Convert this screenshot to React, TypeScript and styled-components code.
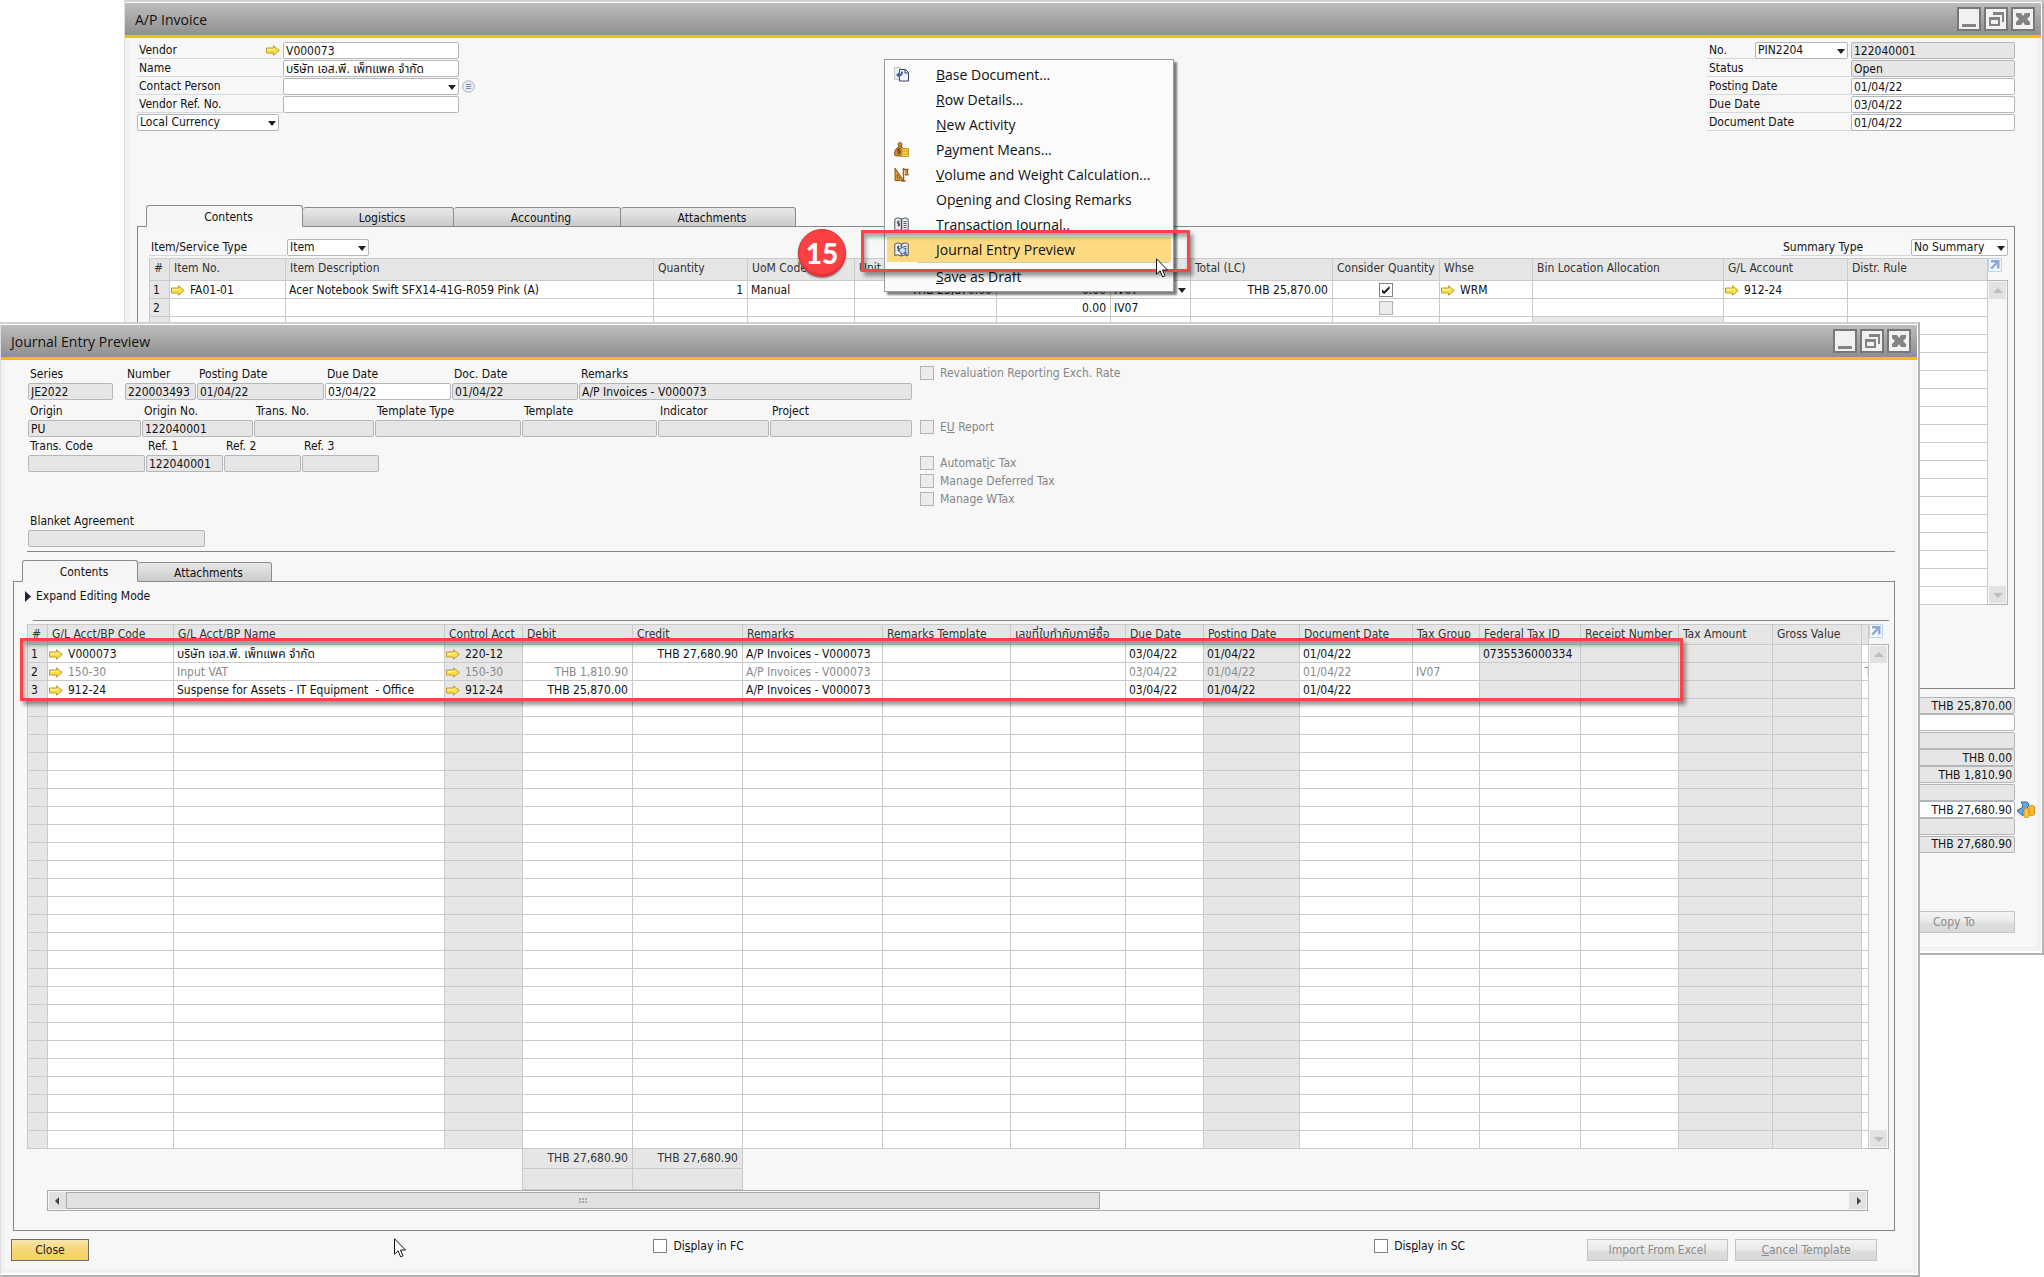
import React, { useId } from 'react';
import styled, { createGlobalStyle, css } from 'styled-components';

const ui = '"DejaVu Sans Condensed", "DejaVu Sans", "Noto Sans Thai", "Noto Sans", sans-serif';
const title = '"Open Sans", "Noto Sans", sans-serif';

const GlobalStyle = createGlobalStyle`
  *, *::before, *::after { box-sizing: border-box; }
  body { margin: 0; background: #fff; overflow: hidden; }
  body, button, input, select, table { font-family: ${ui}; font-size: 12px; line-height: 17px; color: #111; }
`;

/* ---------- desktop and windows ---------- */

const Desktop = styled.main`
  position: relative;
  display: grid;
  align-items: start;
  min-height: 100vh;
`;

const Frame = styled.section<{ $front?: boolean }>`
  isolation: isolate;
  grid-area: 1 / 1;
  min-width: 0;
  margin: ${p => (p.$front ? '322px 124px 0 0' : '0 0 0 124px')};
  padding: 1px 1px 2px 0;
  background: #fff;
  border: solid #b2b2b2;
  border-width: 2px 2px 2px 1px;
  border-top-color: #d0d0d0;
  border-left-color: #dedede;
`;

const TitleBar = styled.header`
  display: flex;
  align-items: center;
  gap: 3px;
  height: 35px;
  padding: 0 6px 0 10px;
  background: linear-gradient(#bdbdbd, #8f8f8f);
  border-bottom: 3px solid #fdb913;
`;

const Title = styled.h1`
  flex: 1;
  margin: 0;
  padding-top: 2px;
  font: 400 14px/20px ${title};
`;

const CaptionButton = styled.button`
  display: grid;
  place-items: center;
  width: 24px;
  height: 24px;
  padding: 0;
  background: #f1f1f1;
  border: 2px solid #777;
`;

const Body = styled.div`
  background: #f7f7f7;
  border: solid #f1f1f1;
  border-width: 0 4px 4px;
`;

const captions = [
  { name: 'Minimize', d: 'M3 15h14v3H3z' },
  { name: 'Restore', d: 'M7 3h11v10h-2V6H7zM3 8h11v9H3zM5 11v4h7v-4z' },
  { name: 'Close', d: 'M3 4h5l2 3 2-3h5v3l-3 3 3 3v3h-5l-2-3-2 3H3v-3l3-3-3-3z' },
];

function AppWindow({ name, front, children }: { name: string; front?: boolean; children: React.ReactNode }) {
  return (
    <Frame $front={front} aria-label={name}>
      <TitleBar>
        <Title>{name}</Title>
        {captions.map(c => (
          <CaptionButton key={c.name} type="button" aria-label={c.name}>
            <svg width="20" height="20" viewBox="0 0 20 20"><path d={c.d} fill="#838383" fillRule="evenodd" /></svg>
          </CaptionButton>
        ))}
      </TitleBar>
      <Body>{children}</Body>
    </Frame>
  );
}

/* ---------- form parts ---------- */

const fieldLook = css`
  display: block;
  width: 100%;
  min-width: 0;
  height: 17px;
  padding: 0 2px;
  line-height: 15px;
  border: 1px solid #b4b7b9;
  border-radius: 2px;
  background: #fff;
`;

const TextBox = styled.input<{ $right?: boolean }>`
  ${fieldLook}
  text-align: ${p => (p.$right ? 'right' : 'left')};
  &:read-only { background: #e6e6e6; }
`;

const SelectBox = styled.select`
  ${fieldLook}
  appearance: none;
`;

const SelectWrap = styled.span<{ $width?: number }>`
  position: relative;
  display: block;
  flex: none;
  width: ${p => (p.$width ? `${p.$width}px` : '100%')};
  &::after {
    content: '';
    position: absolute;
    right: 3px;
    top: 7px;
    border: 4px solid transparent;
    border-top: 5px solid #222;
    border-bottom: 0;
    pointer-events: none;
  }
`;

function Select({ id, value, label, width }: { id?: string; value: string; label?: string; width?: number }) {
  return (
    <SelectWrap $width={width}>
      <SelectBox id={id} aria-label={label} defaultValue={value}>
        <option>{value}</option>
      </SelectBox>
    </SelectWrap>
  );
}

const LineLabel = styled.label`
  display: flex;
  align-items: center;
  justify-content: space-between;
  height: 17px;
  padding: 0 3px 0 2px;
  border-bottom: 1px solid #d3d8dc;
  white-space: nowrap;
`;

const LinkIcon = () => (
  <svg width="14" height="11" viewBox="0 0 14 11" aria-hidden="true">
    <path d="M.5 3h7V.8L13.3 5.5 7.500 10.200V8H.5z" fill="#fbe04a" stroke="#c09a32" />
    <path d="M1.500 4.500h7" stroke="#fff6b5" />
  </svg>
);

const ListIcon = () => (
  <svg width="13" height="13" viewBox="0 0 13 13" aria-hidden="true">
    <circle cx="6.500" cy="6.500" r="5.800" fill="#e6ebf5" stroke="#a6b1c8" />
    <path d="M4 4.500h5M4 6.500h5M4 8.500h5" stroke="#7e8aa6" />
  </svg>
);

const HeadFields = styled.div`
  display: flex;
  justify-content: space-between;
  align-items: flex-start;
  padding: 4px 22px 74px 8px;
`;

const FieldGrid = styled.div<{ $cols: string }>`
  display: grid;
  grid-template-columns: ${p => p.$cols};
  gap: 1px 0;
  align-items: center;
`;

const Spot = styled.span`
  padding-left: 3px;
  line-height: 0;
`;

const WideLabel = styled(LineLabel)`
  grid-column: span 2;
`;

/* ---------- tabs ---------- */

const TabStrip = styled.div`
  display: flex;
  align-items: flex-end;
  height: 22px;
  margin-bottom: -1px;
  padding-left: 17px;
`;

const Tab = styled.button<{ $width: number; $active?: boolean }>`
  position: relative;
  width: ${p => p.$width}px;
  height: ${p => (p.$active ? 22 : 20)}px;
  padding: 2px 0 0 8px;
  border: 1px solid #8b8b8b;
  border-radius: 3px 3px 0 0;
  ${p =>
    p.$active
      ? css`background: #f6f6f6; border-bottom-color: #f7f7f7;`
      : css`background: linear-gradient(#e9e9e9, #cbcbcb); border-left-width: 0;`}
`;

const Panel = styled.div<{ $pad: string; $margin: string }>`
  margin: ${p => p.$margin};
  padding: ${p => p.$pad};
  border: 1px solid #868686;
`;

/* ---------- grids ---------- */

const GridRow = styled.div`
  display: flex;
  position: relative;
`;

const Table = styled.table`
  flex: 1;
  width: 0;
  min-width: 0;
  table-layout: fixed;
  border-collapse: separate;
  border-spacing: 0;
  border: solid #cacaca;
  border-width: 1px 0 0 1px;
`;

const Th = styled.th<{ $tall?: boolean }>`
  height: ${p => (p.$tall ? 22 : 20)}px;
  padding: ${p => (p.$tall ? '0 0 3px 4px' : '0 0 0 4px')};
  overflow: hidden;
  background: #e5e5e5;
  border: solid #cacaca;
  border-width: 0 1px 1px 0;
  color: #333;
  font-weight: 400;
  text-align: left;
  white-space: nowrap;
`;

const Td = styled.td<{ $shade?: boolean; $dim?: boolean; $align?: string }>`
  height: 18px;
  padding: 2px 4px 0 3px;
  overflow: hidden;
  background: ${p => (p.$shade ? '#e6e6e6' : '#fff')};
  border: solid #cacaca;
  border-width: 0 1px 1px 0;
  color: ${p => (p.$dim ? '#8a8a8a' : '#111')};
  line-height: 15px;
  text-align: ${p => p.$align || 'left'};
  white-space: pre;
`;

const Linked = styled.span`
  display: flex;
  align-items: center;
  gap: 5px;
  margin-left: -2px;
`;

const CellDrop = styled.span`
  display: flex;
  align-items: center;
  justify-content: space-between;
  &::after {
    content: '';
    border: 4px solid transparent;
    border-top: 5px solid #222;
    border-bottom: 0;
  }
`;

const Side = styled.div<{ $head: number }>`
  display: flex;
  flex-direction: column;
  width: 20px;
  & > :first-child { height: ${p => p.$head}px; }
`;

const ExpandButton = styled.button`
  display: flex;
  align-items: flex-start;
  flex: none;
  padding: 0;
  border: 0;
  background: none;
  line-height: 0;
`;

const VScroll = styled.div`
  flex: 1;
  display: flex;
  flex-direction: column;
  justify-content: space-between;
  padding: 1px;
  border: 1px solid #b3b3b3;
  border-left-width: 0;
`;

const ScrollButton = styled.button`
  display: grid;
  place-items: center;
  width: 17px;
  height: 17px;
  padding: 0;
  border: 0;
  background: #e2e2e2;
`;

const Triangle = ({ dir, color }: { dir: 'up' | 'down' | 'left' | 'right'; color: string }) => {
  const d = { up: 'M0 7l5-5 5 5z', down: 'M0 3l5 5 5-5z', left: 'M6 1L2 5l4 4z', right: 'M4 1l4 4-4 4z' }[dir];
  return <svg width="10" height="10" viewBox="0 0 10 10" aria-hidden="true"><path d={d} fill={color} /></svg>;
};

function GridSide({ head }: { head: number }) {
  return (
    <Side $head={head}>
      <ExpandButton type="button" aria-label="Expand grid">
        <svg width="14" height="14" viewBox="0 0 14 14">
          <path d="M.5.5h13v13H.5z" fill="#f2f7fc" stroke="#b9d3ea" />
          <path d="M3 2h8.500v8.500h-2.500V6.300L4 11.500 2.300 9.800 7.500 4.500H3z" fill="#8fa9cf" />
        </svg>
      </ExpandButton>
      <VScroll>
        <ScrollButton type="button" aria-label="Scroll up"><Triangle dir="up" color="#bdbdbd" /></ScrollButton>
        <ScrollButton type="button" aria-label="Scroll down"><Triangle dir="down" color="#bdbdbd" /></ScrollButton>
      </VScroll>
    </Side>
  );
}

const Check = styled.input`
  appearance: none;
  flex: none;
  display: grid;
  place-items: center;
  width: 14px;
  height: 14px;
  margin: 0;
  background: #fff;
  border: 1px solid #808080;
  &:disabled { background: #ececec; border-color: #b3b3b3; }
  &:checked::after {
    content: '';
    width: 8px;
    height: 8px;
    background: #111;
    clip-path: polygon(0 40%, 35% 65%, 100% 0, 100% 35%, 35% 100%, 0 75%);
  }
`;

const CellCheck = styled(Check)`
  margin: 0 auto 1px;
`;

type Col = { name: string; width: number; shade?: boolean; align?: string; untitled?: boolean };
type Cell = { text?: string; link?: boolean; drop?: boolean; check?: 'on' | 'off'; shade?: boolean };
type Row = { dim?: boolean; cells: Record<string, Cell | string> };

function DataGrid({ cols, rows, count, numbered, tall, label }: {
  cols: Col[]; rows: Row[]; count: number; numbered: number; tall?: boolean; label: string;
}) {
  return (
    <Table aria-label={label}>
      <colgroup>{cols.map(c => <col key={c.name} width={c.width} />)}</colgroup>
      <thead>
        <tr>{cols.map(c => <Th key={c.name} $tall={tall} scope="col">{c.untitled ? '' : c.name}</Th>)}</tr>
      </thead>
      <tbody>
        {Array.from({ length: count }, (_, r) => {
          const row = rows[r];
          return (
            <tr key={r}>
              {cols.map((c, i) => {
                const raw = row?.cells[c.name];
                const cell: Cell = i === 0 ? { text: r < numbered ? String(r + 1) : '' } : typeof raw === 'string' ? { text: raw } : raw || {};
                return (
                  <Td key={c.name} $shade={c.shade || cell.shade} $dim={i > 0 && row?.dim} $align={c.align}>
                    {cell.link ? <Linked><LinkIcon />{cell.text}</Linked>
                      : cell.drop ? <CellDrop>{cell.text}</CellDrop>
                      : cell.check ? <CellCheck type="checkbox" aria-label="Consider Quantity" defaultChecked={cell.check === 'on'} disabled={cell.check === 'off'} />
                      : cell.text}
                  </Td>
                );
              })}
            </tr>
          );
        })}
      </tbody>
    </Table>
  );
}

/* ---------- A/P invoice ---------- */

const invoiceCols: Col[] = [
  { name: '#', width: 20, shade: true },
  { name: 'Item No.', width: 116 },
  { name: 'Item Description', width: 368 },
  { name: 'Quantity', width: 94, align: 'right' },
  { name: 'UoM Code', width: 107 },
  { name: 'Unit Price', width: 142, align: 'right' },
  { name: 'discount', width: 114, align: 'right', untitled: true },
  { name: 'taxCode', width: 80, untitled: true },
  { name: 'Total (LC)', width: 142, align: 'right' },
  { name: 'Consider Quantity', width: 107 },
  { name: 'Whse', width: 93 },
  { name: 'Bin Location Allocation', width: 191 },
  { name: 'G/L Account', width: 124 },
  { name: 'Distr. Rule', width: 140 },
];

const invoiceRows: Row[] = [
  {
    cells: {
      'Item No.': { text: 'FA01-01', link: true },
      'Item Description': 'Acer Notebook Swift SFX14-41G-R059 Pink (A)',
      Quantity: '1',
      'UoM Code': 'Manual',
      'Unit Price': 'THB 25,870.00',
      discount: '0.00',
      taxCode: { text: 'IV07', drop: true },
      'Total (LC)': 'THB 25,870.00',
      'Consider Quantity': { check: 'on' },
      Whse: { text: 'WRM', link: true },
      'G/L Account': { text: '912-24', link: true },
    },
  },
  { cells: { discount: '0.00', taxCode: 'IV07', 'Consider Quantity': { check: 'off' } } },
  { cells: { 'Bin Location Allocation': { shade: true } } },
];

const Toolbar = styled.div`
  display: flex;
  padding-bottom: 2px;
`;

const ToolLabel = styled(LineLabel)<{ $width: number }>`
  width: ${p => p.$width}px;
`;

const Spacer = styled.div`
  flex: 1;
`;

const Totals = styled.div`
  display: grid;
  grid-template-columns: 180px 18px;
  grid-auto-rows: 1fr;
  justify-content: end;
  align-items: center;
  gap: 0 2px;
  height: 156px;
  padding-right: 2px;
`;

const totals: [string, string, boolean?][] = [
  ['Total Before Discount', 'THB 25,870.00'],
  ['Discount', '', true],
  ['Total Down Payment', ''],
  ['Rounding', 'THB 0.00'],
  ['Tax', 'THB 1,810.90'],
  ['WTax Amount', ''],
  ['Total Payment Due', 'THB 27,680.90', true],
  ['Applied Amount', ''],
  ['Balance Due', 'THB 27,680.90'],
];

const CoinsIcon = () => (
  <svg width="18" height="17" viewBox="0 0 18 17" aria-hidden="true">
    <path d="M4 1h6l2 2-1 3-5 4v5L.5 10.500V9L5 7l1-3z" fill="#6aa7d8" stroke="#2c6ea5" />
    <path d="M7 9c0-2 5-2 5 0v6c0 2-5 2-5 0z" fill="#fbc63c" stroke="#d98a14" />
    <path d="M12 6c0-2 5.500-2 5.500 0v7c0 2-5.500 2-5.500 0z" fill="#fdb92c" stroke="#d98a14" />
  </svg>
);

const PushButton = styled.button<{ $width: number }>`
  width: ${p => p.$width}px;
  height: 22px;
  padding: 0;
  border: 1px solid #6b6b6b;
  background: linear-gradient(#f9e6b0, #f6d878 45%, #f5d066);
  color: #222;
  &:disabled {
    border-color: #c4c4c4;
    background: linear-gradient(#f4f4f4, #e9e9e9 50%, #dedede 55%, #d9d9d9);
    color: #8b8b8b;
  }
`;

const InvoiceFoot = styled.div`
  display: flex;
  justify-content: flex-end;
  padding: 58px 22px 14px;
`;

function Invoice() {
  const id = useId();
  const right: [string, string, boolean][] = [
    ['Status', 'Open', true],
    ['Posting Date', '01/04/22', false],
    ['Due Date', '03/04/22', false],
    ['Document Date', '01/04/22', false],
  ];
  return (
    <AppWindow name="A/P Invoice">
      <HeadFields>
        <FieldGrid $cols="146px 176px 20px">
          <LineLabel htmlFor={id + 'v'}>Vendor<LinkIcon /></LineLabel>
          <TextBox id={id + 'v'} defaultValue="V000073" /><i />
          <LineLabel htmlFor={id + 'n'}>Name</LineLabel>
          <TextBox id={id + 'n'} defaultValue="บริษัท เอส.พี. เพ็ทแพค จำกัด" /><i />
          <LineLabel htmlFor={id + 'c'}>Contact Person</LineLabel>
          <Select id={id + 'c'} value="" />
          <Spot><ListIcon /></Spot>
          <LineLabel htmlFor={id + 'r'}>Vendor Ref. No.</LineLabel>
          <TextBox id={id + 'r'} defaultValue="" /><i />
          <Select label="Currency" value="Local Currency" width={142} />
        </FieldGrid>
        <FieldGrid $cols="48px 96px 164px">
          <LineLabel htmlFor={id + 's'}>No.</LineLabel>
          <Select id={id + 's'} value="PIN2204" width={93} />
          <TextBox aria-label="Document number" readOnly value="122040001" />
          {right.map(([name, value, locked]) => (
            <React.Fragment key={name}>
              <WideLabel htmlFor={id + name}>{name}</WideLabel>
              <TextBox id={id + name} readOnly={locked} defaultValue={value} />
            </React.Fragment>
          ))}
        </FieldGrid>
      </HeadFields>

      <TabStrip role="tablist">
        <Tab role="tab" type="button" $width={157} $active>Contents</Tab>
        <Tab role="tab" type="button" $width={151}>Logistics</Tab>
        <Tab role="tab" type="button" $width={167}>Accounting</Tab>
        <Tab role="tab" type="button" $width={175}>Attachments</Tab>
      </TabStrip>
      <Panel $margin="0 22px 8px 8px" $pad="12px 6px 83px 11px">
        <Toolbar>
          <ToolLabel $width={138} htmlFor={id + 't'}>Item/Service Type</ToolLabel>
          <Select id={id + 't'} value="Item" width={82} />
          <Spacer />
          <ToolLabel $width={130} htmlFor={id + 'y'}>Summary Type</ToolLabel>
          <Select id={id + 'y'} value="No Summary" width={97} />
        </Toolbar>
        <GridRow>
          <DataGrid label="Invoice items" cols={invoiceCols} rows={invoiceRows} count={18} numbered={2} tall />
          <GridSide head={22} />
        </GridRow>
      </Panel>
      <Totals>
        {totals.map(([name, value, open]) => (
          <React.Fragment key={name}>
            <TextBox aria-label={name} $right readOnly={!open} defaultValue={value} />
            {name === 'Total Payment Due' ? <CoinsIcon /> : <i />}
          </React.Fragment>
        ))}
      </Totals>
      <InvoiceFoot>
        <PushButton $width={122} type="button" disabled>Copy To</PushButton>
      </InvoiceFoot>
    </AppWindow>
  );
}

/* ---------- journal entry preview ---------- */

const entryCols: Col[] = [
  { name: '#', width: 20, shade: true },
  { name: 'G/L Acct/BP Code', width: 126 },
  { name: 'G/L Acct/BP Name', width: 271 },
  { name: 'Control Acct', width: 78, shade: true },
  { name: 'Debit', width: 110, align: 'right' },
  { name: 'Credit', width: 110, align: 'right' },
  { name: 'Remarks', width: 140 },
  { name: 'Remarks Template', width: 128 },
  { name: 'เลขที่ใบกำกับภาษีซื้อ', width: 115 },
  { name: 'Due Date', width: 78 },
  { name: 'Posting Date', width: 96, shade: true },
  { name: 'Document Date', width: 113 },
  { name: 'Tax Group', width: 67 },
  { name: 'Federal Tax ID', width: 101 },
  { name: 'Receipt Number', width: 98 },
  { name: 'Tax Amount', width: 94, shade: true },
  { name: 'Gross Value', width: 89, shade: true },
  { name: 'base', width: 7, untitled: true },
];

const shared = {
  Remarks: 'A/P Invoices - V000073',
  'Due Date': '03/04/22',
  'Posting Date': '01/04/22',
  'Document Date': '01/04/22',
  'Federal Tax ID': { shade: true },
  'Receipt Number': { shade: true },
};

const entryRows: Row[] = [
  {
    cells: {
      ...shared,
      'G/L Acct/BP Code': { text: 'V000073', link: true },
      'G/L Acct/BP Name': 'บริษัท เอส.พี. เพ็ทแพค จำกัด',
      'Control Acct': { text: '220-12', link: true },
      Credit: 'THB 27,680.90',
      'Federal Tax ID': { text: '0735536000334', shade: true },
    },
  },
  {
    dim: true,
    cells: {
      ...shared,
      'G/L Acct/BP Code': { text: '150-30', link: true },
      'G/L Acct/BP Name': 'Input VAT',
      'Control Acct': { text: '150-30', link: true },
      Debit: 'THB 1,810.90',
      'Tax Group': 'IV07',
      base: 'T',
    },
  },
  {
    cells: {
      ...shared,
      'G/L Acct/BP Code': { text: '912-24', link: true },
      'G/L Acct/BP Name': 'Suspense for Assets - IT Equipment  - Office',
      'Control Acct': { text: '912-24', link: true },
      Debit: 'THB 25,870.00',
    },
  },
];

const EntryHead = styled.div`
  display: flex;
  align-items: flex-start;
  gap: 7px;
  margin: 0 18px 8px 22px;
  padding: 5px 0 4px 1px;
  border-bottom: 1px solid #868686;
`;

const EntryForm = styled.div`
  width: 885px;
`;

const FormLine = styled.div<{ $cols: string; $gap?: number }>`
  display: grid;
  grid-template-columns: ${p => p.$cols};
  margin-top: ${p => p.$gap || 0}px;
`;

const Stack = styled.label<{ $inset?: number }>`
  display: block;
  min-width: 0;
  padding-right: ${p => p.$inset || 1}px;
  white-space: nowrap;
`;

const Caption = styled.span`
  display: block;
  height: 18px;
  padding: 1px 0 0 2px;
`;

type F = [string, string?, number?];
function Fields({ cols, gap, items }: { cols: string; gap?: number; items: F[] }) {
  return (
    <FormLine $cols={cols} $gap={gap}>
      {items.map(([name, value, inset]) => (
        <Stack key={name} $inset={inset}>
          <Caption>{name}</Caption>
          <TextBox readOnly={name !== 'Due Date'} defaultValue={value || ''} />
        </Stack>
      ))}
    </FormLine>
  );
}

const Flags = styled.div`
  display: grid;
  grid-auto-rows: 18px;
  padding-top: 1px;
`;

const Flag = styled.label<{ $row?: number; $dim?: boolean }>`
  grid-row: ${p => p.$row || 'auto'};
  display: flex;
  align-items: flex-start;
  gap: 6px;
  line-height: 15px;
  white-space: pre;
  color: ${p => (p.$dim ? '#858585' : '#111')};
`;

const ExpandToggle = styled.button`
  display: flex;
  align-items: center;
  gap: 5px;
  height: 18px;
  margin: 5px 0 15px 11px;
  padding: 0;
  border: 0;
  background: none;
`;

const Rule = styled.hr`
  height: 1px;
  margin: 0 5px 3px 19px;
  border: 0;
  background: #868686;
`;

const TableArea = styled.div`
  padding: 0 5px 0 13px;
`;

const Sums = styled.div`
  display: grid;
  grid-template-columns: 110px 110px;
  grid-auto-rows: 20px 21px;
  width: 221px;
  margin-left: 495px;
  border-left: 1px solid #cacaca;
`;

const Sum = styled.output`
  padding: 1px 4px 0;
  background: #e6e6e6;
  border: solid #cacaca;
  border-width: 0 1px 1px 0;
  text-align: right;
  color: #333;
`;

const HScroll = styled.div`
  display: flex;
  align-items: center;
  height: 21px;
  margin: 0 21px 0 20px;
  padding: 1px;
  border: 1px solid #a9a9a9;
`;

const Track = styled.div`
  flex: 1;
  height: 17px;
`;

const Thumb = styled.div`
  display: flex;
  align-items: center;
  justify-content: center;
  width: 58%;
  height: 17px;
  background: #e1e1e1;
  border: 1px solid #a9a9a9;
`;

const Grip = styled.i`
  width: 9px;
  height: 6px;
  background: radial-gradient(circle at 1px 1px, #aaa 1px, transparent 1px) 0 0 / 3px 3px;
`;

const EntryFoot = styled.footer`
  display: flex;
  padding: 0 36px 8px 6px;
`;

const FootGap = styled.div<{ $grow: number }>`
  flex: ${p => p.$grow} 0 0;
`;

const ButtonPair = styled.div`
  display: flex;
  gap: 7px;
`;

const callout = css`
  border: 3px solid #fd4444;
  box-shadow: 3px 4px 4px rgba(0, 0, 0, 0.4), inset 2px 4px 4px rgba(0, 0, 0, 0.35);
  pointer-events: none;
`;

const RowMark = styled.div`
  position: absolute;
  left: -7px;
  top: 14px;
  width: 1663px;
  height: 63px;
  ${callout}
`;

function JournalEntry() {
  return (
    <AppWindow name="Journal Entry Preview" front>
      <EntryHead>
        <EntryForm>
          <Fields cols="97px 72px 128px 127px 127px 334px" items={[
            ['Series', 'JE2022', 12], ['Number', '220003493'], ['Posting Date', '01/04/22'],
            ['Due Date', '03/04/22'], ['Doc. Date', '01/04/22'], ['Remarks', 'A/P Invoices - V000073'],
          ]} />
          <Fields gap={2} cols="114px 112px 121px 147px 136px 112px 143px" items={[
            ['Origin', 'PU'], ['Origin No.', '122040001'], ['Trans. No.'], ['Template Type'], ['Template'], ['Indicator'], ['Project'],
          ]} />
          <Fields cols="118px 78px 78px 78px" items={[['Trans. Code'], ['Ref. 1', '122040001'], ['Ref. 2'], ['Ref. 3']]} />
          <Fields gap={40} cols="178px" items={[['Blanket Agreement']]} />
        </EntryForm>
        <Flags>
          <Flag $row={1} $dim><Check type="checkbox" disabled /><span>Revaluation Reporting Exch. Rate</span></Flag>
          <Flag $row={4} $dim><Check type="checkbox" disabled /><span>E<u>U</u> Report</span></Flag>
          <Flag $row={6} $dim><Check type="checkbox" disabled /><span>Automat<u>i</u>c Tax</span></Flag>
          <Flag $row={7} $dim><Check type="checkbox" disabled /><span>Manage Deferred Tax</span></Flag>
          <Flag $row={8} $dim><Check type="checkbox" disabled /><span>Manage WTax</span></Flag>
        </Flags>
      </EntryHead>

      <TabStrip role="tablist">
        <Tab role="tab" type="button" $width={116} $active>Contents</Tab>
        <Tab role="tab" type="button" $width={134}>Attachments</Tab>
      </TabStrip>
      <Panel $margin="0 18px 8px 8px" $pad="0 0 19px">
        <ExpandToggle type="button">
          <svg width="6" height="11" viewBox="0 0 6 11" aria-hidden="true"><path d="M0 0l6 5.500L0 11z" fill="#222236" /></svg>
          Expand Editing Mode
        </ExpandToggle>
        <Rule />
        <TableArea>
          <GridRow>
            <DataGrid label="Journal entry rows" cols={entryCols} rows={entryRows} count={28} numbered={3} />
            <GridSide head={20} />
            <RowMark />
          </GridRow>
          <Sums>
            <Sum>THB 27,680.90</Sum>
            <Sum>THB 27,680.90</Sum>
            <Sum />
            <Sum />
          </Sums>
          <HScroll>
            <ScrollButton type="button" aria-label="Scroll left"><Triangle dir="left" color="#444" /></ScrollButton>
            <Track><Thumb><Grip /></Thumb></Track>
            <ScrollButton type="button" aria-label="Scroll right"><Triangle dir="right" color="#444" /></ScrollButton>
          </HScroll>
        </TableArea>
      </Panel>
      <EntryFoot>
        <PushButton $width={78} type="button">Close</PushButton>
        <FootGap $grow={565} />
        <Flag><Check type="checkbox" /><span>Di<u>s</u>play in FC</span></Flag>
        <FootGap $grow={631} />
        <Flag><Check type="checkbox" /><span>Dis<u>p</u>lay in SC</span></Flag>
        <FootGap $grow={122} />
        <ButtonPair>
          <PushButton $width={141} type="button" disabled>Import From Excel</PushButton>
          <PushButton $width={142} type="button" disabled><u>C</u>ancel Template</PushButton>
        </ButtonPair>
      </EntryFoot>
    </AppWindow>
  );
}

/* ---------- context menu and callouts ---------- */

const Menu = styled.div`
  position: absolute;
  left: 884px;
  top: 59px;
  width: 290px;
  padding: 2px;
  background: #fbfbfb;
  border: 1px solid #9a9a9a;
  box-shadow: 3px 3px 2px rgba(0, 0, 0, 0.5);
`;

const MenuItem = styled.button<{ $hot?: boolean }>`
  display: grid;
  grid-template-columns: 42px 1fr;
  align-items: center;
  width: 100%;
  height: 25px;
  padding: 0 0 0 7px;
  border: 0;
  background: ${p => (p.$hot ? '#fdda81' : 'transparent')};
  font: 400 14px/20px ${title};
  text-align: left;
  white-space: nowrap;
  & > svg { display: block; }
`;

const MenuRule = styled.hr`
  height: 1px;
  margin: 0 2px 1px 30px;
  border: 0;
  background: #c9c9c9;
`;

const MenuMark = styled.div`
  position: absolute;
  left: 861px;
  top: 230px;
  width: 329px;
  height: 42px;
  ${callout}
`;

const Badge = styled.div`
  position: absolute;
  left: 798px;
  top: 229px;
  display: grid;
  place-items: center;
  width: 48px;
  height: 48px;
  border-radius: 50%;
  background: #fc4144;
  border: 1px solid #d93438;
  box-shadow: 0 1px 2px rgba(0, 0, 0, 0.5), inset 0 -2px 1px rgba(190, 20, 30, 0.35);
  color: #fff;
  font: 900 28px/30px Lato, ${title};
`;

const Pointer = styled.svg<{ $x: number; $y: number }>`
  position: absolute;
  left: ${p => p.$x}px;
  top: ${p => p.$y}px;
`;

const Cursor = ({ x, y }: { x: number; y: number }) => (
  <Pointer $x={x} $y={y} width="13" height="20" viewBox="0 0 13 20" aria-hidden="true">
    <path d="M.5.800v15.400l3.600-3.400 2.500 6 2.400-1-2.500-5.800h5z" fill="#fff" stroke="#111" />
  </Pointer>
);

const BaseDocIcon = () => (
  <svg width="15" height="15" viewBox="0 0 15 15" aria-hidden="true">
    <path d="M.5.5h6v12h-6z" fill="#eceef0" stroke="#c3c7cd" />
    <path d="M5.500 2.500h6l3 3v8.500h-9z" fill="#eef4fc" stroke="#36425f" />
    <path d="M11 2.500V6h3.500" fill="none" stroke="#36425f" />
    <path d="M9 4.500c0 3-1 4.500-3 4.500v2.500L2 8l4-3.500V7c1 0 1-1 1-2.500z" fill="#3f5f9e" />
  </svg>
);
const MoneyIcon = () => (
  <svg width="15" height="15" viewBox="0 0 15 15" aria-hidden="true">
    <circle cx="6" cy="2.500" r="2" fill="#c98a34" stroke="#8f5f1c" />
    <path d="M4.500 4.500h3c2 2 3.500 4 3 7 0 2-1 2.500-2.500 2.500H2.500C0 14 0 12 .8 9.500c.6-2 2-3.500 3.700-5z" fill="#c4832e" stroke="#8f5f1c" />
    <path d="M6 7H4v2h2v2H4" fill="none" stroke="#4f3208" />
    <path d="M8 6.500h6.500v8H7.500v-3.500H8z" fill="#f7d24b" stroke="#c99a20" />
    <path d="M8 9h6M8 12h6" stroke="#c99a20" />
  </svg>
);
const ScaleIcon = () => (
  <svg width="15" height="15" viewBox="0 0 15 15" aria-hidden="true">
    <path d="M1 1v12.500h8.500zM3.500 7.500V11H6z" fill="#d8993f" stroke="#8f5816" fillRule="evenodd" />
    <path d="M9 2.500h5.500M9.500 1v13M7.500 14h4" stroke="#9a5f1a" fill="none" strokeWidth="1.500" />
    <path d="M12 3v3l-1 2h3.500l-1-2V3" fill="#e0a850" stroke="#9a5f1a" />
  </svg>
);
const JournalIcon = ({ lens }: { lens?: boolean }) => (
  <svg width="15" height="15" viewBox="0 0 15 15" aria-hidden="true">
    <path d="M.8 2l3-1.200L7.500 2l3.700-1.200 3 1.200v11.500l-3-.7-3.700 1.200-3.700-1.200-3 .7z" fill="#eceef1" stroke="#505765" />
    <path d="M7.500 2v11.500" stroke="#505765" strokeWidth="1.500" />
    <path d="M5.500 4.500h-2v2h2v2h-2M4.500 3.500v6M9.500 4.500h3M9.500 6.500h3M9.500 8.500h3M9.500 10.500h3" fill="none" stroke="#505765" />
    {lens && <><circle cx="8.500" cy="8.500" r="3" fill="#cfe3f7" stroke="#4a6f9c" /><path d="M10.500 11l3 3" stroke="#4a6f9c" strokeWidth="2" /></>}
  </svg>
);

const None = () => <span />;

export default function App() {
  return (
    <>
      <GlobalStyle />
      <Desktop>
        <Invoice />
        <JournalEntry />
        <Menu role="menu">
          <MenuItem role="menuitem" type="button"><BaseDocIcon /><span><u>B</u>ase Document...</span></MenuItem>
          <MenuItem role="menuitem" type="button"><None /><span><u>R</u>ow Details...</span></MenuItem>
          <MenuItem role="menuitem" type="button"><None /><span><u>N</u>ew Activity</span></MenuItem>
          <MenuItem role="menuitem" type="button"><MoneyIcon /><span>P<u>a</u>yment Means...</span></MenuItem>
          <MenuItem role="menuitem" type="button"><ScaleIcon /><span><u>V</u>olume and Weight Calculation...</span></MenuItem>
          <MenuItem role="menuitem" type="button"><None /><span>Op<u>e</u>ning and Closing Remarks</span></MenuItem>
          <MenuItem role="menuitem" type="button"><JournalIcon /><span>Transaction Journal..</span></MenuItem>
          <MenuItem role="menuitem" type="button" $hot><JournalIcon lens /><span>Journal Entry Preview</span></MenuItem>
          <MenuRule />
          <MenuItem role="menuitem" type="button"><None /><span><u>S</u>ave as Draft</span></MenuItem>
        </Menu>
        <MenuMark />
        <Badge>15</Badge>
        <Cursor x={1156} y={258} />
        <Cursor x={394} y={1238} />
      </Desktop>
    </>
  );
}
